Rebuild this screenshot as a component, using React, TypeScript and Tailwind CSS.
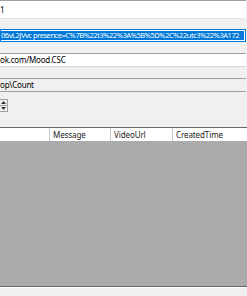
export default function App() {
  return (
    <div
      className="w-[247px] h-[296px] bg-[#f0f0f0] overflow-hidden flex flex-col text-[8px] text-black leading-none"
      style={{ fontFamily: '"Noto Sans", "Liberation Sans", sans-serif' }}
    >
      {/* textbox 1 */}
      <div className="h-[19px] w-[246px] bg-white border-t border-[#a0a0a0] border-b border-b-[#e3e3e3] flex items-center">
        <span>1</span>
      </div>

      {/* focused textbox with selection */}
      <div className="mt-[10px] h-[13px] w-[246px] bg-white border border-[#0078d7] flex items-center">
        <div className="h-[9px] w-[243px] bg-[#0078d7] text-white text-[7.5px] flex items-center whitespace-nowrap overflow-hidden tracking-[-0.45px]">
          06vL2JVvc presence=C%7B%22t3%22%3A%5B%5D%2C%22utc3%22%3A172
        </div>
      </div>

      {/* textbox 3 */}
      <div className="mt-[11px] h-[14px] w-[246px] bg-white border-t border-[#a0a0a0] border-b border-b-[#d9d9d9] flex items-center tracking-[-0.2px]">
        <span>ok.com/Mood.CSC</span>
      </div>

      {/* readonly textbox */}
      <div className="mt-[11px] h-[14px] w-[246px] bg-[#f0f0f0] border-t border-b border-[#a0a0a0] flex items-center tracking-[-0.2px]">
        <span>op\Count</span>
      </div>

      {/* numeric spinner buttons */}
      <div className="mt-[7px] h-[13px] w-[8px] border border-l-0 border-[#a0a0a0] flex flex-col">
        <div className="flex-1 border-b border-[#a0a0a0] flex items-center justify-center">
          <svg width="5" height="3" viewBox="0 0 5 3">
            <path d="M0 3 L2.5 0 L5 3 Z" fill="#333" />
          </svg>
        </div>
        <div className="flex-1 flex items-center justify-center">
          <svg width="5" height="3" viewBox="0 0 5 3">
            <path d="M0 0 L2.5 3 L5 0 Z" fill="#333" />
          </svg>
        </div>
      </div>

      {/* grid */}
      <div className="mt-[15px] flex-1 flex flex-col border-t border-b border-[#696969] bg-[#ababab]">
        <div className="h-[13px] bg-white flex text-[#222] tracking-[-0.1px]">
          <div className="w-[50px] border-r border-[#c8c8c8]" />
          <div className="w-[61px] border-r border-[#c8c8c8] pl-[3px] flex items-center">Message</div>
          <div className="w-[62px] border-r border-[#c8c8c8] pl-[3px] flex items-center">VideoUrl</div>
          <div className="flex-1 pl-[3px] flex items-center">CreatedTime</div>
        </div>
        <div className="flex-1" />
      </div>

      {/* bottom strip */}
      <div className="h-[9px] border-t border-white bg-[#f0f0f0]" />
    </div>
  );
}
